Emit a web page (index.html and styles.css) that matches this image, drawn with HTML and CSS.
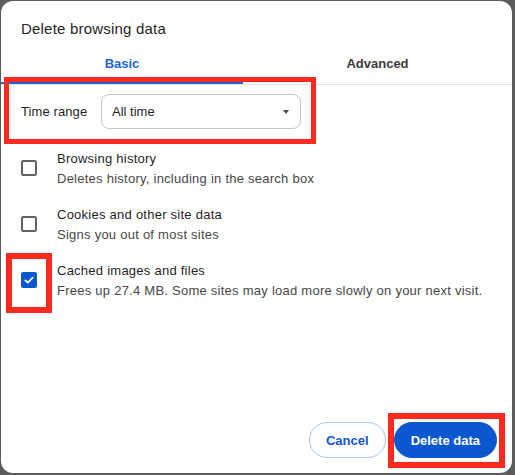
FILE: index.html
```html
<!DOCTYPE html>
<html lang="en">
<head>
<meta charset="utf-8">
<title>Delete browsing data</title>
<link rel="stylesheet" href="styles.css">
</head>
<body>
<div class="dialog">
  <div class="title">Delete browsing data</div>
  <div class="tabs">
    <div class="tab active">Basic</div>
    <div class="tab">Advanced</div>
  </div>
  <div class="content">
    <div class="time-row">
      <span class="time-label">Time range</span>
      <div class="select"><span>All time</span><span class="arrow"></span></div>
    </div>
    <div class="items">
      <div class="item">
        <span class="checkbox"></span>
        <div class="item-text">
          <div class="item-title">Browsing history</div>
          <div class="item-sub">Deletes history, including in the search box</div>
        </div>
      </div>
      <div class="item">
        <span class="checkbox"></span>
        <div class="item-text">
          <div class="item-title">Cookies and other site data</div>
          <div class="item-sub">Signs you out of most sites</div>
        </div>
      </div>
      <div class="item">
        <span class="checkbox checked"><svg viewBox="0 0 16 16" width="16" height="16"><path d="M4.3 8.3 L6.8 10.7 L11.7 5.7" fill="none" stroke="#fff" stroke-width="1.7" stroke-linecap="round" stroke-linejoin="round"/></svg></span>
        <div class="item-text">
          <div class="item-title">Cached images and files</div>
          <div class="item-sub">Frees up 27.4 MB. Some sites may load more slowly on your next visit.</div>
        </div>
      </div>
    </div>
  </div>
  <div class="footer">
    <button class="btn cancel">Cancel</button>
    <button class="btn primary">Delete data</button>
  </div>
</div>
<div class="mark mark-time"></div>
<div class="mark mark-check"></div>
<div class="mark mark-delete"></div>
</body>
</html>
```
FILE: styles.css
```css
html, body {
  margin: 0;
  height: 100%;
}
body {
  background: #5c5c5c;
  font-family: "Liberation Sans", Arial, sans-serif;
  overflow: hidden;
}
.dialog {
  box-sizing: border-box;
  width: 511px;
  height: 472px;
  margin: 1px 0 0 1px;
  background: #fff;
  border-radius: 12px;
  display: flex;
  flex-direction: column;
}
.title {
  padding: 18px 20px 0;
  font-size: 15px;
  line-height: 20px;
  letter-spacing: 0.2px;
  color: #1f1f1f;
}
.tabs {
  display: flex;
  margin-top: 5px;
  border-bottom: 1px solid #e3e3e3;
}
.tab {
  flex: 1;
  padding: 10px 0;
  font-size: 13px;
  font-weight: bold;
  line-height: 20px;
  color: #3c3c3c;
  text-align: center;
}
.tab.active {
  flex: 0 0 242px;
  color: #1b66db;
  box-shadow: inset 0 -2px 0 #1b66db;
}
.content {
  padding: 9px 20px 0;
}
.time-row {
  display: flex;
  align-items: center;
}
.time-label {
  flex: 0 0 80px;
  font-size: 13px;
  line-height: 20px;
  letter-spacing: 0.1px;
  color: #1f1f1f;
}
.select {
  box-sizing: border-box;
  width: 200px;
  height: 35px;
  border: 1px solid #c4c7c5;
  border-radius: 8px;
  display: flex;
  align-items: center;
  justify-content: space-between;
  padding: 0 11px 0 10px;
  font-size: 13px;
  color: #1f1f1f;
}
.arrow {
  width: 0;
  height: 0;
  border-left: 3.5px solid transparent;
  border-right: 3.5px solid transparent;
  border-top: 4px solid #474747;
}
.items {
  margin-top: 20px;
  display: flex;
  flex-direction: column;
  gap: 16px;
}
.item {
  display: flex;
  align-items: center;
  gap: 20px;
}
.checkbox {
  box-sizing: border-box;
  flex: none;
  width: 16px;
  height: 16px;
  margin-bottom: 2px;
  border: 2px solid #5f6368;
  border-radius: 2px;
}
.checkbox.checked {
  border: none;
  background: #0b57d0;
}
.checkbox svg {
  display: block;
}
.item-title {
  font-size: 13px;
  line-height: 20px;
  letter-spacing: 0.25px;
  color: #1f1f1f;
}
.item-sub {
  font-size: 13px;
  line-height: 20px;
  letter-spacing: 0.25px;
  color: #474747;
}
.footer {
  margin-top: auto;
  display: flex;
  justify-content: flex-end;
  gap: 8px;
  padding: 0 15px 15px;
}
.btn {
  box-sizing: border-box;
  height: 36px;
  border-radius: 18px;
  padding: 0 16px;
  font-family: "Liberation Sans", Arial, sans-serif;
  font-size: 13px;
  font-weight: bold;
  border: 1px solid;
}
.cancel {
  background: #fff;
  color: #0b57d0;
  border-color: #a8c7fa;
}
.primary {
  background: #0b57d0;
  color: #fff;
  border-color: #0b57d0;
}
.mark {
  position: absolute;
  box-sizing: border-box;
  border: 5px solid #fb2a1e;
}
.mark-time {
  left: 4px;
  top: 77px;
  width: 312px;
  height: 67px;
}
.mark-check {
  left: 6px;
  top: 253px;
  width: 46px;
  height: 60px;
  border-width: 6px;
}
.mark-delete {
  left: 388px;
  top: 413px;
  width: 117px;
  height: 55px;
  border-width: 6px;
}
```
